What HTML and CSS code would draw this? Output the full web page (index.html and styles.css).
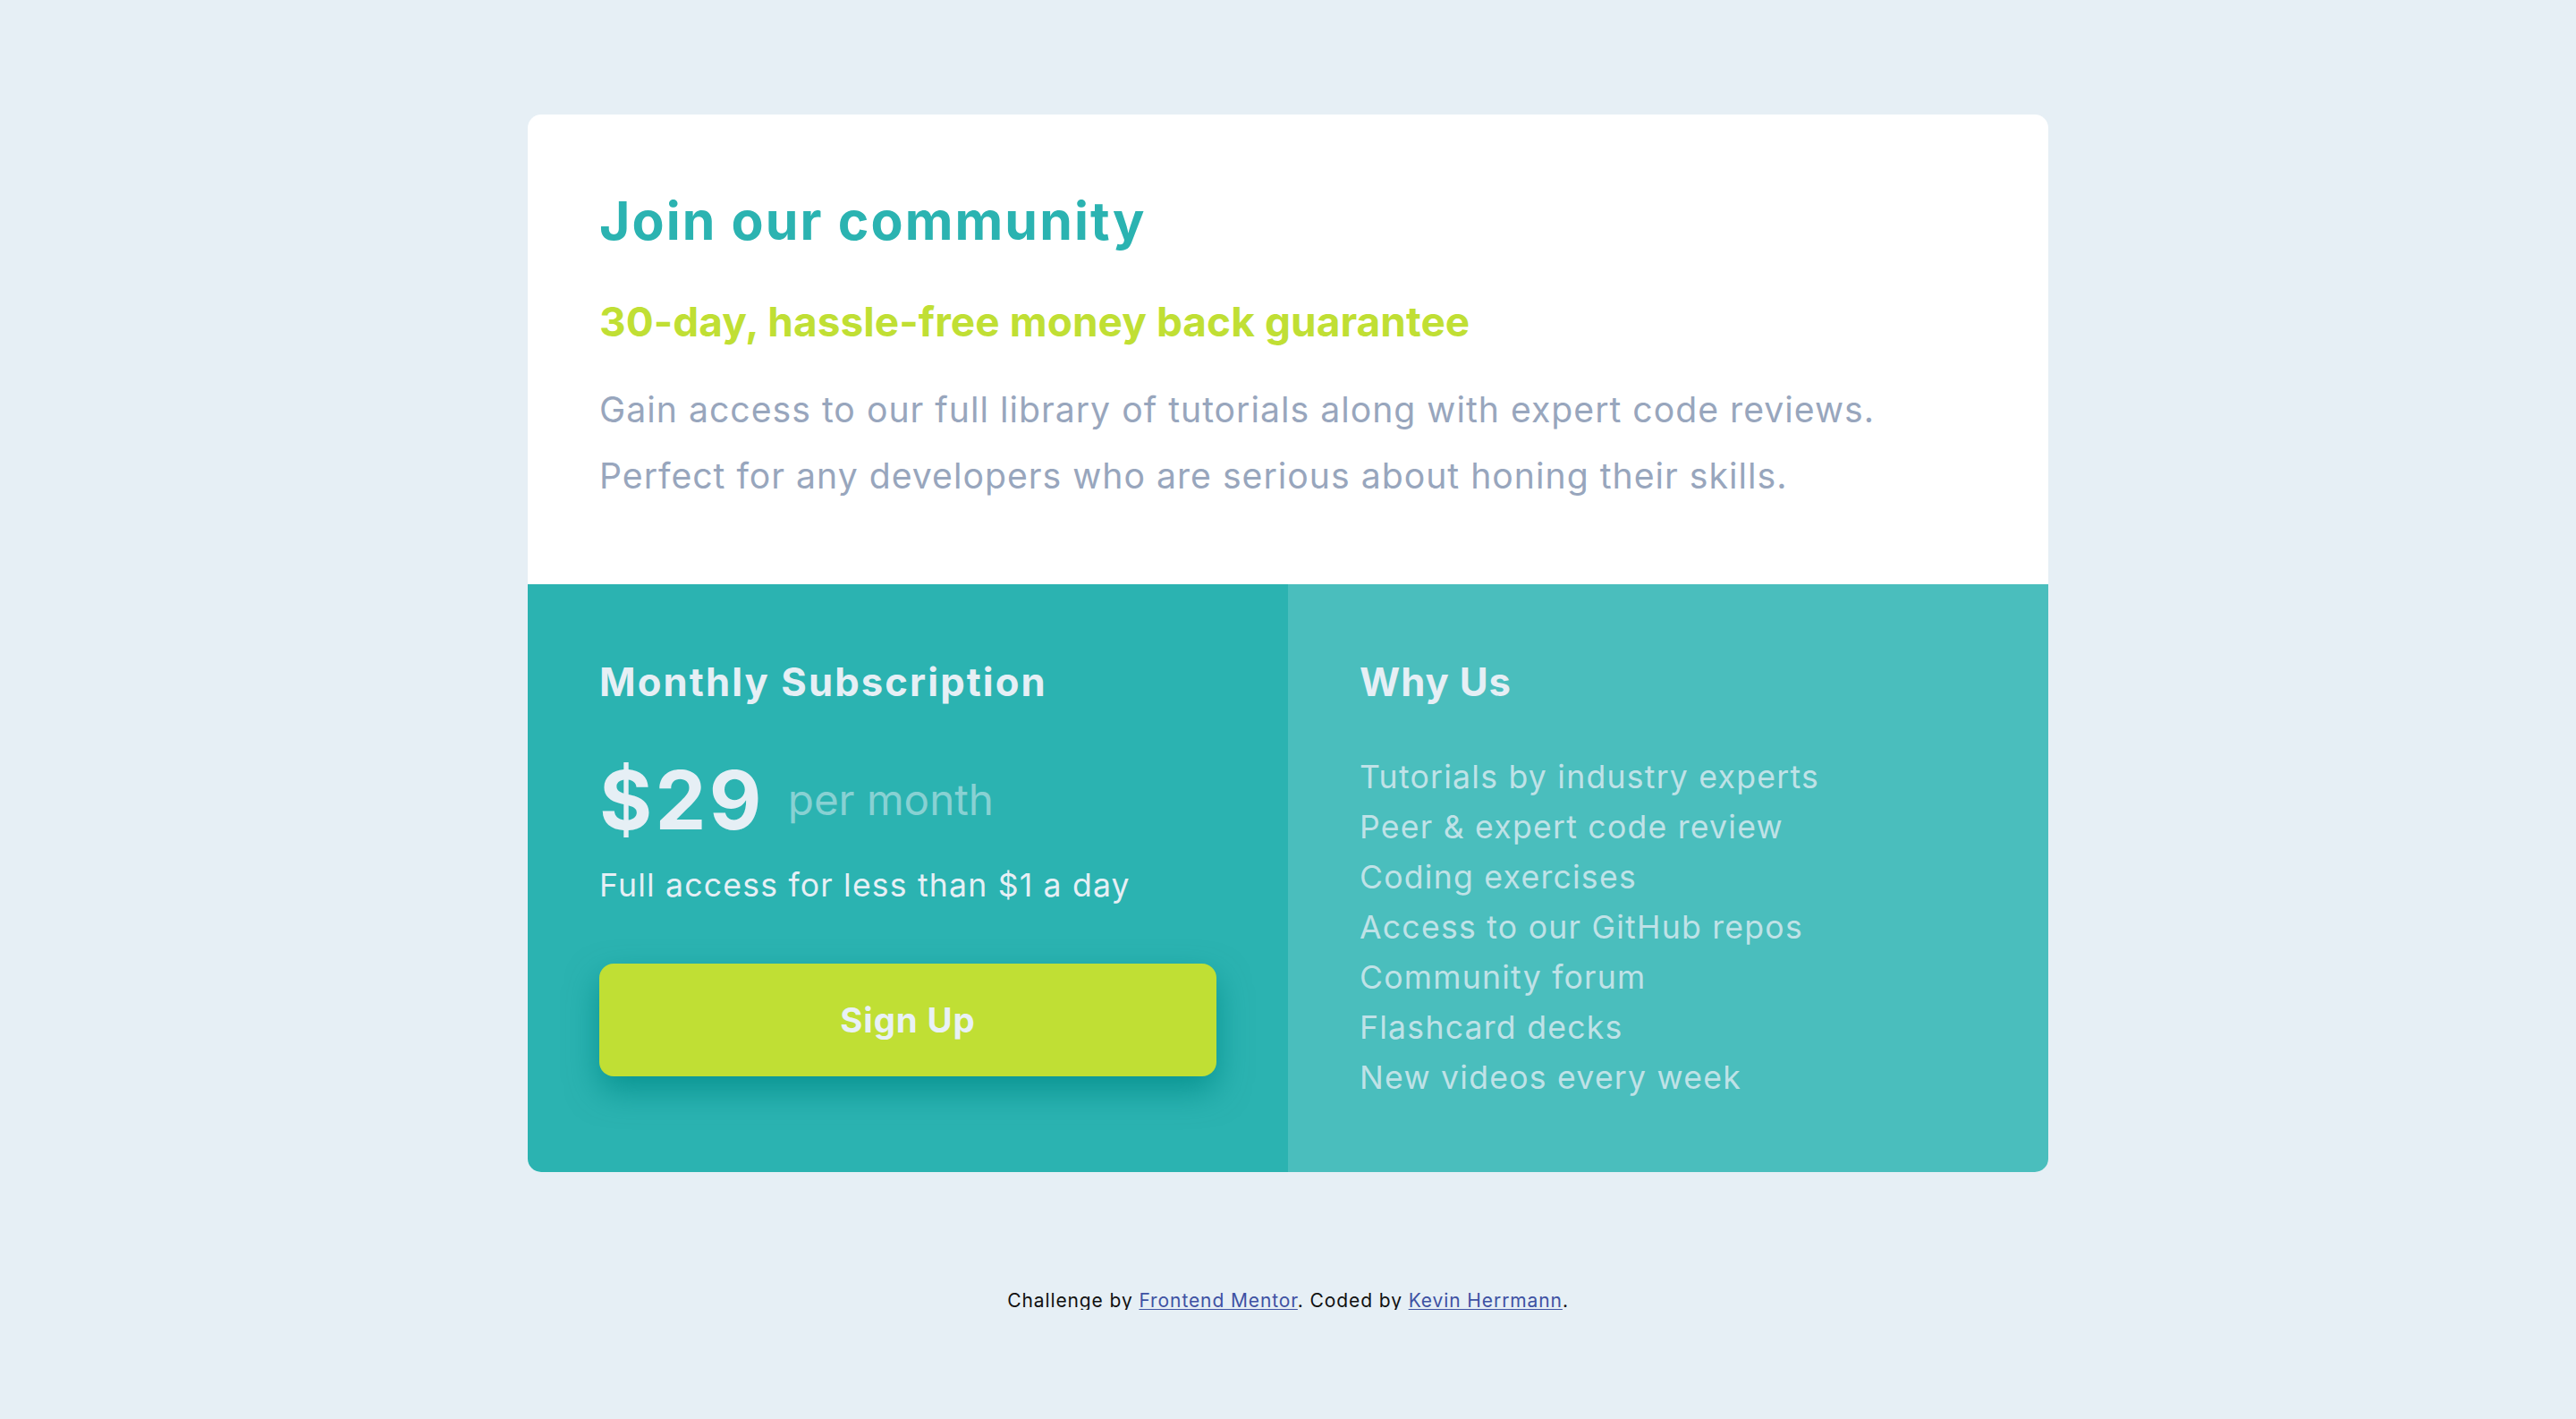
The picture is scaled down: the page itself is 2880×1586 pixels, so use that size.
FILE: index.html
```html
<!DOCTYPE html>
<html lang="en">
<head>
<meta charset="utf-8">
<title>Single price grid component</title>
<link rel="stylesheet" href="styles.css">
</head>
<body>
<main class="page">
  <article class="card">
    <section class="intro">
      <h1 class="intro-title">Join our community</h1>
      <h2 class="intro-subtitle">30-day, hassle-free money back guarantee</h2>
      <p class="intro-text">Gain access to our full library of tutorials along with expert code reviews.<br>Perfect for any developers who are serious about honing their skills.</p>
    </section>
    <div class="plans">
      <section class="plan plan--subscription">
        <h3 class="plan-title">Monthly Subscription</h3>
        <div class="price">
          <span class="price-amount">$29</span>
          <span class="price-period">per month</span>
        </div>
        <p class="price-note">Full access for less than $1 a day</p>
        <button class="signup" type="button">Sign Up</button>
      </section>
      <section class="plan plan--why">
        <h3 class="plan-title plan-title--why">Why Us</h3>
        <ul class="benefits">
          <li>Tutorials by industry experts</li>
          <li>Peer &amp; expert code review</li>
          <li>Coding exercises</li>
          <li>Access to our GitHub repos</li>
          <li>Community forum</li>
          <li>Flashcard decks</li>
          <li>New videos every week</li>
        </ul>
      </section>
    </div>
  </article>
  <footer class="attribution">Challenge by <a href="#">Frontend Mentor</a>. Coded by <a href="#">Kevin Herrmann</a>.</footer>
</main>
</body>
</html>
```
FILE: styles.css
```css
* { box-sizing: border-box; }

body {
  margin: 0;
  background: #E6EFF5;
  font-family: Inter, "Noto Sans", "Open Sans", sans-serif;
}

.page {
  padding-top: 128px;
  display: flex;
  flex-direction: column;
  align-items: center;
}

.card {
  width: 1700px;
  background: #ffffff;
  border-radius: 15px;
  overflow: hidden;
}

.intro {
  padding: 88.8px 80px 83.2px;
}

.intro-title {
  margin: 0;
  font-size: 58.9px;
  line-height: 59px;
  font-weight: 700;
  letter-spacing: 2.1px;
  color: #2BB3B1;
}

.intro-subtitle {
  margin: 61.2px 0 0;
  font-size: 45.9px;
  line-height: 46px;
  font-weight: 700;
  letter-spacing: 0.1px;
  color: #C0DF34;
}

.intro-text {
  margin: 38.5px 0 0;
  font-size: 39.2px;
  line-height: 74px;
  font-weight: 400;
  letter-spacing: 1px;
  color: #98A6BD;
}

.plans {
  display: grid;
  grid-template-columns: 1fr 1fr;
}

.plan {
  padding: 88.3px 80px 77px;
  color: #E6EFF5;
}

.plan--subscription { background: #2BB3B1; }
.plan--why { background: #4ABEBD; }

.plan-title {
  margin: 0;
  font-size: 43.6px;
  line-height: 44px;
  font-weight: 700;
  letter-spacing: 2.1px;
}

.plan-title--why { letter-spacing: 0.9px; }

.price {
  display: flex;
  align-items: center;
  margin-top: 63.7px;
}

.price-amount {
  font-size: 90.4px;
  line-height: 90.4px;
  font-weight: 700;
  letter-spacing: 3.3px;
}

.price-period {
  margin-left: 26px;
  font-size: 47.6px;
  line-height: 48px;
  font-weight: 400;
  color: rgba(230, 239, 245, 0.5);
}

.price-note {
  margin: 32.7px 0 0;
  font-size: 35.6px;
  line-height: 36px;
  font-weight: 400;
  letter-spacing: 1.2px;
}

.signup {
  display: block;
  width: 100%;
  height: 126px;
  margin-top: 69.2px;
  border: 0;
  border-radius: 16px;
  background: #C0DF34;
  color: #E9F1F6;
  font-family: inherit;
  font-size: 38.4px;
  font-weight: 700;
  letter-spacing: 0.9px;
  box-shadow: 0 16px 36px rgba(0, 140, 138, 0.8);
  cursor: pointer;
}

.benefits {
  list-style: none;
  margin: 56.2px 0 0;
  padding: 0;
  font-size: 35.6px;
  line-height: 56px;
  font-weight: 400;
  letter-spacing: 1.25px;
  color: rgba(230, 239, 245, 0.75);
}

.attribution {
  margin-top: 133px;
  font-size: 21px;
  line-height: 21px;
  letter-spacing: 0.9px;
  color: #111;
  text-align: center;
}

.attribution a {
  color: #3E52A3;
}
```
